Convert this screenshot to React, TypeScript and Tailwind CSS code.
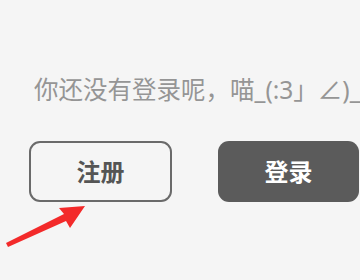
export default function App() {
  return (
    <div
      className="relative h-[280px] w-[360px] overflow-hidden bg-[#f5f5f5]"
      style={{ fontFamily: '"Noto Sans", "Noto Sans CJK SC", sans-serif' }}
    >
      {/* Prompt */}
      <div className="flex h-[180px] flex-col justify-center pl-[34px]">
        <p className="whitespace-nowrap text-[24.5px] leading-[26px] text-[#959595]">
          你还没有登录呢，喵_(:3」∠)_
        </p>
      </div>

      {/* Buttons */}
      <div className="absolute left-0 top-[141px] flex w-[400px] gap-[46px] pl-[29px]">
        <button className="flex h-[61px] w-[143px] items-center justify-center rounded-[11px] border-2 border-[#6a6a6a] bg-transparent text-[24px] font-bold text-[#555]">
          注册
        </button>
        <button className="flex h-[61px] w-[141px] items-center justify-center rounded-[11px] bg-[#5b5b5b] text-[24px] font-bold text-white">
          登录
        </button>
      </div>

      {/* Arrow annotation */}
      <svg className="absolute left-0 top-0" width="360" height="280" viewBox="0 0 360 280">
        <polygon
          points="85,206 59,208 64,214 6,243 8,247 66,221 70,228"
          fill="#f32a2a"
        />
      </svg>
    </div>
  );
}
